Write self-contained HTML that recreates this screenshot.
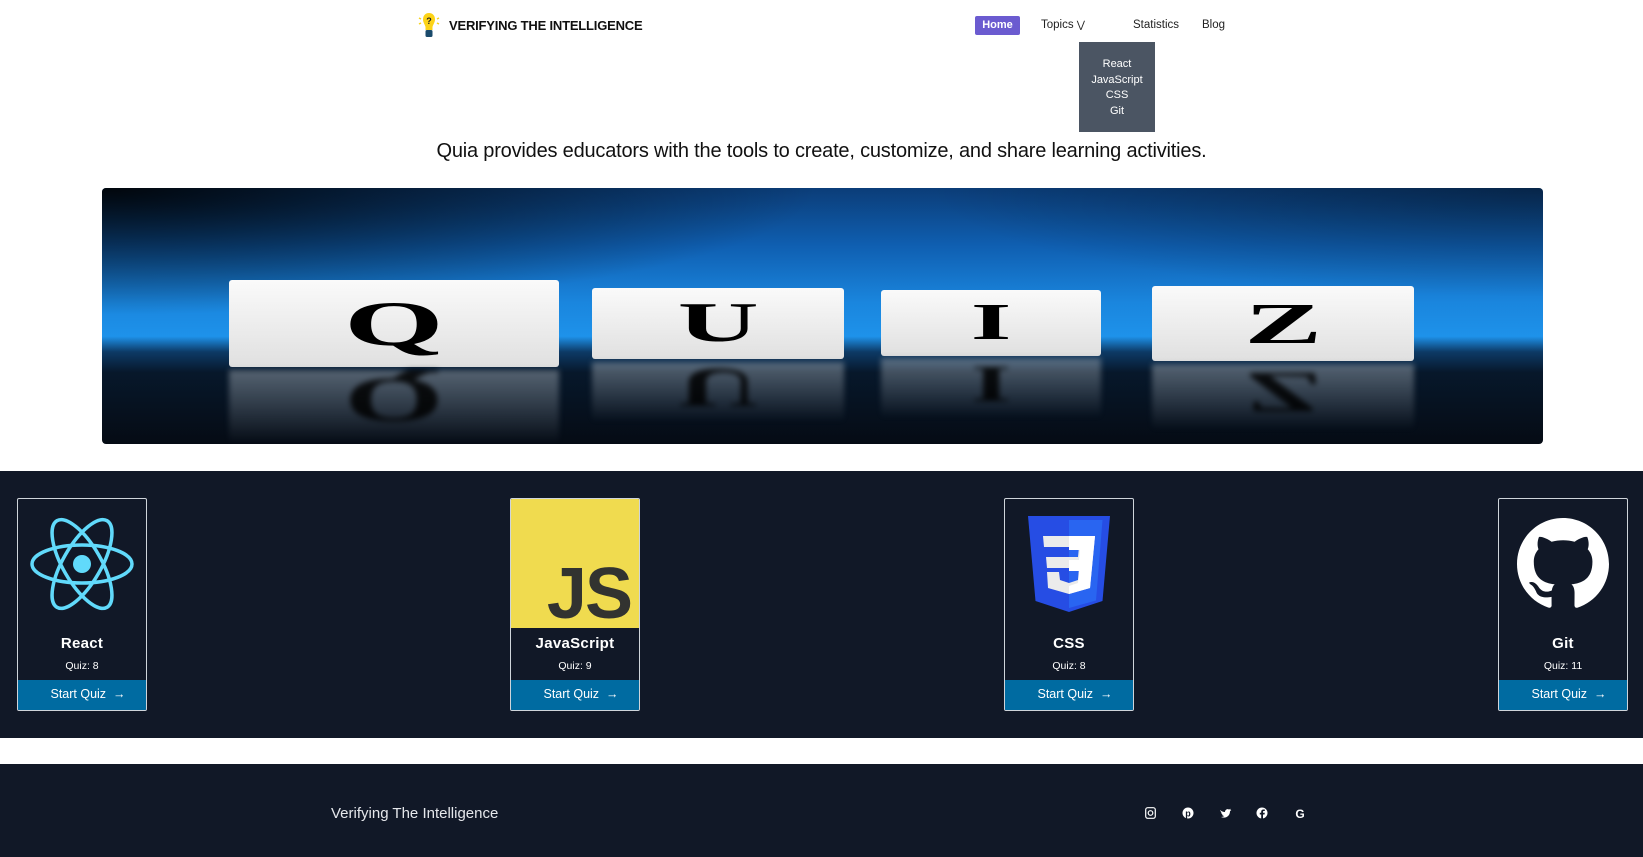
<!DOCTYPE html>
<html><head><meta charset="utf-8"><style>
*{margin:0;padding:0;box-sizing:border-box}
body{width:1643px;height:857px;background:#fff;font-family:"Liberation Sans",sans-serif;position:relative;overflow:hidden}
.abs{position:absolute}
.nav{font-size:11.5px;color:#222;top:19px}
.dd{left:1079px;top:42px;width:76px;height:90px;background:#4b5563;color:#fff;font-size:11px;text-align:center;padding-top:15px;line-height:15.7px}
.banner{left:102px;top:188px;width:1441px;height:256px;border-radius:4px;overflow:hidden;
background:linear-gradient(180deg,#0b3d78 0%,#0f5eb0 22%,#1a86de 45%,#1e92ea 58%,#0d3a66 64%,#07182b 72%,#050b14 100%)}
.banner:before{content:"";position:absolute;inset:0;background:radial-gradient(ellipse at 0% 0%,rgba(0,0,0,.9) 0%,rgba(0,0,0,0) 35%),radial-gradient(ellipse at 100% 0%,rgba(0,0,0,.4) 0%,rgba(0,0,0,0) 30%)}
.blk{position:absolute;background:linear-gradient(180deg,#fafafa,#e0e0e0);font-family:"Liberation Serif",serif;font-weight:bold;color:#000;text-align:center;border-radius:3px;overflow:hidden}
.blk span,.ref span{display:inline-block;transform:scaleX(2)}
.ref{position:absolute;background:linear-gradient(180deg,rgba(150,160,170,.55),rgba(30,40,50,0));font-family:"Liberation Serif",serif;font-weight:bold;color:rgba(0,0,0,.85);text-align:center;filter:blur(3px);overflow:hidden}
.ref span{transform:scale(2,-1)}
.dark{left:0;top:471px;width:1643px;height:267px;background:#111827}
.card{position:absolute;top:498px;width:130px;height:213px;border:1px solid #cfd4da;border-radius:2px;background:#111827;color:#fff;text-align:center;overflow:hidden}
.card .img{height:129px;display:flex;align-items:center;justify-content:center}
.card h3{font-size:15px;font-weight:bold;margin-top:7px;letter-spacing:.3px}
.card p{font-size:10.5px;margin-top:8px}
.card .btn{position:absolute;left:0;bottom:0;width:100%;height:30px;background:#006ba1;font-size:12.5px;line-height:28px;padding-left:12px}
.foot{left:0;top:764px;width:1643px;height:93px;background:#111827}
</style></head><body>
<svg class="abs" style="left:417px;top:12px" width="24" height="27" viewBox="0 0 24 27"><g stroke="#f7d21a" stroke-width="1.5"><line x1="2" y1="6" x2="4" y2="7"/><line x1="2" y1="12" x2="4" y2="11"/><line x1="22" y1="6" x2="20" y2="7"/><line x1="22" y1="12" x2="20" y2="11"/></g><path d="M12 1c4 0 6 3 6 6.5 0 3-2 5-2.5 7.5V18h-7v-3C8 12.5 6 10.5 6 7.5 6 4 8 1 12 1z" fill="#fcd316"/><rect x="8.5" y="18" width="7" height="7" rx="1.5" fill="#1a4a6b"/><text x="12" y="12" font-size="9" font-weight="bold" text-anchor="middle" fill="#222" font-family="Liberation Sans">?</text></svg>
<div class="abs" style="left:449px;top:18px;font-size:13px;font-weight:bold;color:#111;letter-spacing:-.2px">VERIFYING THE INTELLIGENCE</div>
<div class="abs" style="left:975px;top:16px;width:45px;height:19px;background:#6b5bd0;border-radius:2px;color:#fff;font-size:11px;font-weight:bold;text-align:center;line-height:19px">Home</div>
<div class="abs nav" style="left:1041px">Topics <span style="font-size:10px">&#8897;</span></div>
<div class="abs nav" style="left:1133px">Statistics</div>
<div class="abs nav" style="left:1202px">Blog</div>
<div class="abs dd">React<br>JavaScript<br>CSS<br>Git</div>
<div class="abs" style="left:0;width:1643px;top:140px;text-align:center;font-size:20px;color:#111;letter-spacing:-.2px">Quia provides educators with the tools to create, customize, and share learning activities.</div>
<div class="abs banner">
<div class="blk" style="left:127px;top:92px;width:330px;height:87px;font-size:64px;line-height:87px"><span>Q</span></div>
<div class="blk" style="left:490px;top:100px;width:252px;height:71px;font-size:56px;line-height:71px"><span>U</span></div>
<div class="blk" style="left:779px;top:102px;width:220px;height:66px;font-size:52px;line-height:66px"><span>I</span></div>
<div class="blk" style="left:1050px;top:98px;width:262px;height:75px;font-size:58px;line-height:75px"><span>Z</span></div>
<div class="ref" style="left:127px;top:182px;width:330px;height:74px;font-size:64px;line-height:60px"><span>Q</span></div>
<div class="ref" style="left:490px;top:174px;width:252px;height:60px;font-size:56px;line-height:50px"><span>U</span></div>
<div class="ref" style="left:779px;top:170px;width:220px;height:60px;font-size:52px;line-height:50px"><span>I</span></div>
<div class="ref" style="left:1050px;top:176px;width:262px;height:66px;font-size:58px;line-height:56px"><span>Z</span></div>
</div>
<div class="abs dark"></div>
<div class="card" style="left:17px"><div class="img"><svg width="104" height="94" viewBox="-52 -47 104 94"><g fill="none" stroke="#61dafb" stroke-width="3.5"><ellipse rx="50" ry="19"/><ellipse rx="50" ry="19" transform="rotate(60)"/><ellipse rx="50" ry="19" transform="rotate(120)"/></g><circle r="9" fill="#61dafb"/></svg></div><h3>React</h3><p>Quiz: 8</p><div class="btn">Start Quiz &nbsp;→</div></div>
<div class="card" style="left:510px"><div class="img" style="background:#f0db4f;align-items:flex-end;justify-content:flex-end"><div style="font-size:72px;font-weight:bold;color:#323330;line-height:68px;padding-right:8px;letter-spacing:-2px">JS</div></div><h3>JavaScript</h3><p>Quiz: 9</p><div class="btn">Start Quiz &nbsp;→</div></div>
<div class="card" style="left:1004px"><div class="img"><svg width="82" height="96" viewBox="0 0 82 96"><path d="M0 0h82l-7.5 85L41 96 7.5 85z" fill="#264de4"/><path d="M41 4v88l27-7.5L74.5 4z" fill="#2965f1"/><path d="M15 20h52l-5 52-21 6-21-6-1-16h12l1 8 9 3 9-3 1-12H19l-1-11h32l1-10H16z" fill="#ebebeb"/><path d="M41 20h26l-5 52-21 6V70l9-3 1-12h-10V44h10l1-10h-11z" fill="#fff"/></svg></div><h3>CSS</h3><p>Quiz: 8</p><div class="btn">Start Quiz &nbsp;→</div></div>
<div class="card" style="left:1498px"><div class="img"><svg width="92" height="92" viewBox="0 0 16 16"><path fill="#fff" d="M8 0C3.58 0 0 3.58 0 8c0 3.540 2.29 6.53 5.47 7.59.4.07.55-.17.55-.38 0-.19-.01-.82-.01-1.49-2.01.37-2.53-.49-2.69-.94-.09-.23-.48-.94-.82-1.13-.28-.15-.68-.52-.01-.53.63-.01 1.08.58 1.23.82.72 1.21 1.87.87 2.330.66.07-.52.28-.87.51-1.070-1.78-.2-3.64-.89-3.64-3.95 0-.87.31-1.590.82-2.15-.08-.2-.36-1.02.08-2.12 0 0 .67-.21 2.2.82.64-.18 1.32-.27 2-.27.68 0 1.360.09 2 .27 1.53-1.040 2.2-.82 2.2-.82.44 1.1.16 1.92.08 2.12.51.56.82 1.27.82 2.15 0 3.07-1.87 3.75-3.65 3.95.29.25.54.73.54 1.48 0 1.07-.01 1.93-.01 2.2 0 .21.15.46.55.38A8.013 8.013 0 0016 8c0-4.42-3.58-8-8-8z"/></svg></div><h3>Git</h3><p>Quiz: 11</p><div class="btn">Start Quiz &nbsp;→</div></div>
<div class="abs foot"></div>
<div class="abs" style="left:331px;top:805px;font-size:15px;color:#e5e7eb">Verifying The Intelligence</div>
<svg class="abs" style="left:1145px;top:807px" width="160" height="12" viewBox="0 0 160 12" fill="#fff">
<rect x="0.7" y="0.7" width="9.6" height="10.6" rx="2" fill="none" stroke="#fff" stroke-width="1.2"/><circle cx="5.5" cy="6" r="2.3" fill="none" stroke="#fff" stroke-width="1.2"/>
<circle cx="43" cy="6" r="5.5"/><text x="43" y="9.5" font-size="9" font-weight="bold" fill="#111827" text-anchor="middle" font-family="Liberation Sans">p</text>
<path d="M75 3c1 1 3 2 5 2 0-2 2-3.5 4-2.5l2-.8-1 1.6 1.300-.3c-.3.6-.8 1-1.3 1.3C85 9 81 12 76 10c1.5 0 2.5-.4 3.3-1-1 0-2-.7-2.3-1.5h1c-1-.3-2-1.3-2-2.3l1 .3C76 4.8 75 4 75 3z"/>
<circle cx="117" cy="6" r="5.5"/><path d="M118 12V7.5h1.5l.3-1.7H118V4.8c0-.5.2-.8.9-.8h.9V2.5h-1.3c-1.5 0-2.3.9-2.3 2.2v1.1h-1.4v1.7h1.4V12z" fill="#111827"/>
<text x="155" y="11" font-size="12" font-weight="bold" text-anchor="middle" font-family="Liberation Sans">G</text>
</svg>
</body></html>
